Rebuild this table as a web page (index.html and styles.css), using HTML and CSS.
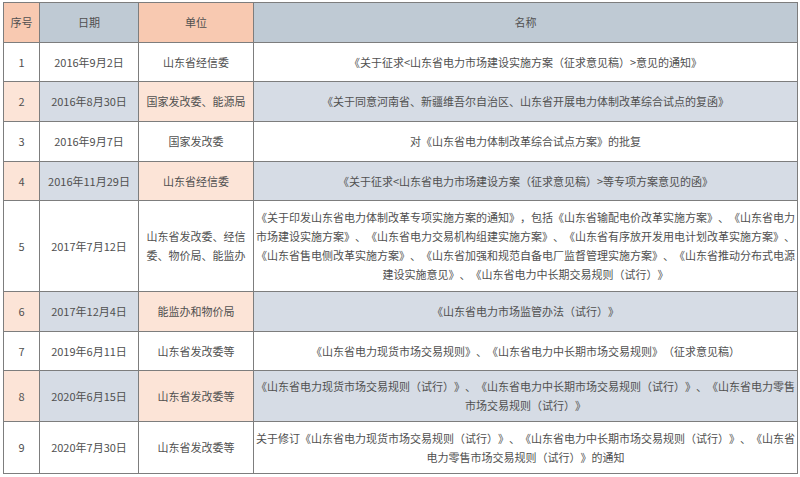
FILE: index.html
```html
<!DOCTYPE html>
<html lang="zh">
<head>
<meta charset="utf-8">
<link rel="stylesheet" href="styles.css">
</head>
<body>
<table class="policy">
  <colgroup>
    <col class="c-no"><col class="c-date"><col class="c-org"><col class="c-name">
  </colgroup>
  <thead>
    <tr class="h-head">
      <th class="peach">序号</th>
      <th class="blue">日期</th>
      <th class="peach">单位</th>
      <th class="blue">名称</th>
    </tr>
  </thead>
  <tbody>
    <tr class="h39">
      <td>1</td><td>2016年9月2日</td><td>山东省经信委</td>
      <td>《关于征求&lt;山东省电力市场建设实施方案（征求意见稿）&gt;意见的通知》</td>
    </tr>
    <tr class="h40 alt">
      <td>2</td><td>2016年8月30日</td><td>国家发改委、能源局</td>
      <td>《关于同意河南省、新疆维吾尔自治区、山东省开展电力体制改革综合试点的复函》</td>
    </tr>
    <tr class="h40">
      <td>3</td><td>2016年9月7日</td><td>国家发改委</td>
      <td>对《山东省电力体制改革综合试点方案》的批复</td>
    </tr>
    <tr class="h39 alt">
      <td>4</td><td>2016年11月29日</td><td>山东省经信委</td>
      <td>《关于征求&lt;山东省电力市场建设方案（征求意见稿）&gt;等专项方案意见的函》</td>
    </tr>
    <tr class="h91">
      <td>5</td><td>2017年7月12日</td><td>山东省发改委、经信委、物价局、能监办</td>
      <td>《关于印发山东省电力体制改革专项实施方案的通知》，包括《山东省输配电价改革实施方案》、《山东省电力<br>市场建设实施方案》、《山东省电力交易机构组建实施方案》、《山东省有序放开发用电计划改革实施方案》、<br>《山东省售电侧改革实施方案》、《山东省加强和规范自备电厂监督管理实施方案》、《山东省推动分布式电源<br>建设实施意见》、《山东省电力中长期交易规则（试行）》</td>
    </tr>
    <tr class="h40 alt">
      <td>6</td><td>2017年12月4日</td><td>能监办和物价局</td>
      <td>《山东省电力市场监管办法（试行）》</td>
    </tr>
    <tr class="h39">
      <td>7</td><td>2019年6月11日</td><td>山东省发改委等</td>
      <td>《山东省电力现货市场交易规则》、《山东省电力中长期市场交易规则》（征求意见稿）</td>
    </tr>
    <tr class="h51 alt">
      <td>8</td><td>2020年6月15日</td><td>山东省发改委等</td>
      <td>《山东省电力现货市场交易规则（试行）》、《山东省电力中长期市场交易规则（试行）》、《山东省电力零售<br>市场交易规则（试行）》</td>
    </tr>
    <tr class="h52">
      <td>9</td><td>2020年7月30日</td><td>山东省发改委等</td>
      <td>关于修订《山东省电力现货市场交易规则（试行）》、《山东省电力中长期市场交易规则（试行）》、《山东省<br>电力零售市场交易规则（试行）》的通知</td>
    </tr>
  </tbody>
</table>
</body>
</html>
```
FILE: styles.css
```css
html, body {
  margin: 0;
  padding: 0;
  background: #ffffff;
}

body {
  padding: 2px 0 0 3px;
}

.policy {
  border-collapse: collapse;
  table-layout: fixed;
  width: 794px;
  font-family: "Noto Sans CJK SC", "Microsoft YaHei", sans-serif;
  font-size: 11px;
  line-height: 19px;
  color: #505050;
  border: 1px solid #7d7d7d;
  text-spacing-trim: space-all;
  font-feature-settings: "palt" 0, "halt" 0;
}

.c-no { width: 36px; }
.c-date { width: 99px; }
.c-org { width: 115px; }
.c-name { width: 544px; }

.policy th,
.policy td {
  border: 1px solid #7d7d7d;
  text-align: center;
  vertical-align: middle;
  padding: 0 1px;
  font-weight: normal;
  overflow: hidden;
}

.policy td:nth-child(3) {
  padding: 0 4px;
}

.h-head { height: 40px; }
.h39 { height: 39px; }
.h40 { height: 40px; }
.h51 { height: 51px; }
.h52 { height: 52px; }
.h91 { height: 91px; }

.policy th.peach { background: #f8c9b1; }
.policy th.blue { background: #bfcad4; }

.alt td:nth-child(odd) { background: #fce4d7; }
.alt td:nth-child(even) { background: #d6dce5; }
```
